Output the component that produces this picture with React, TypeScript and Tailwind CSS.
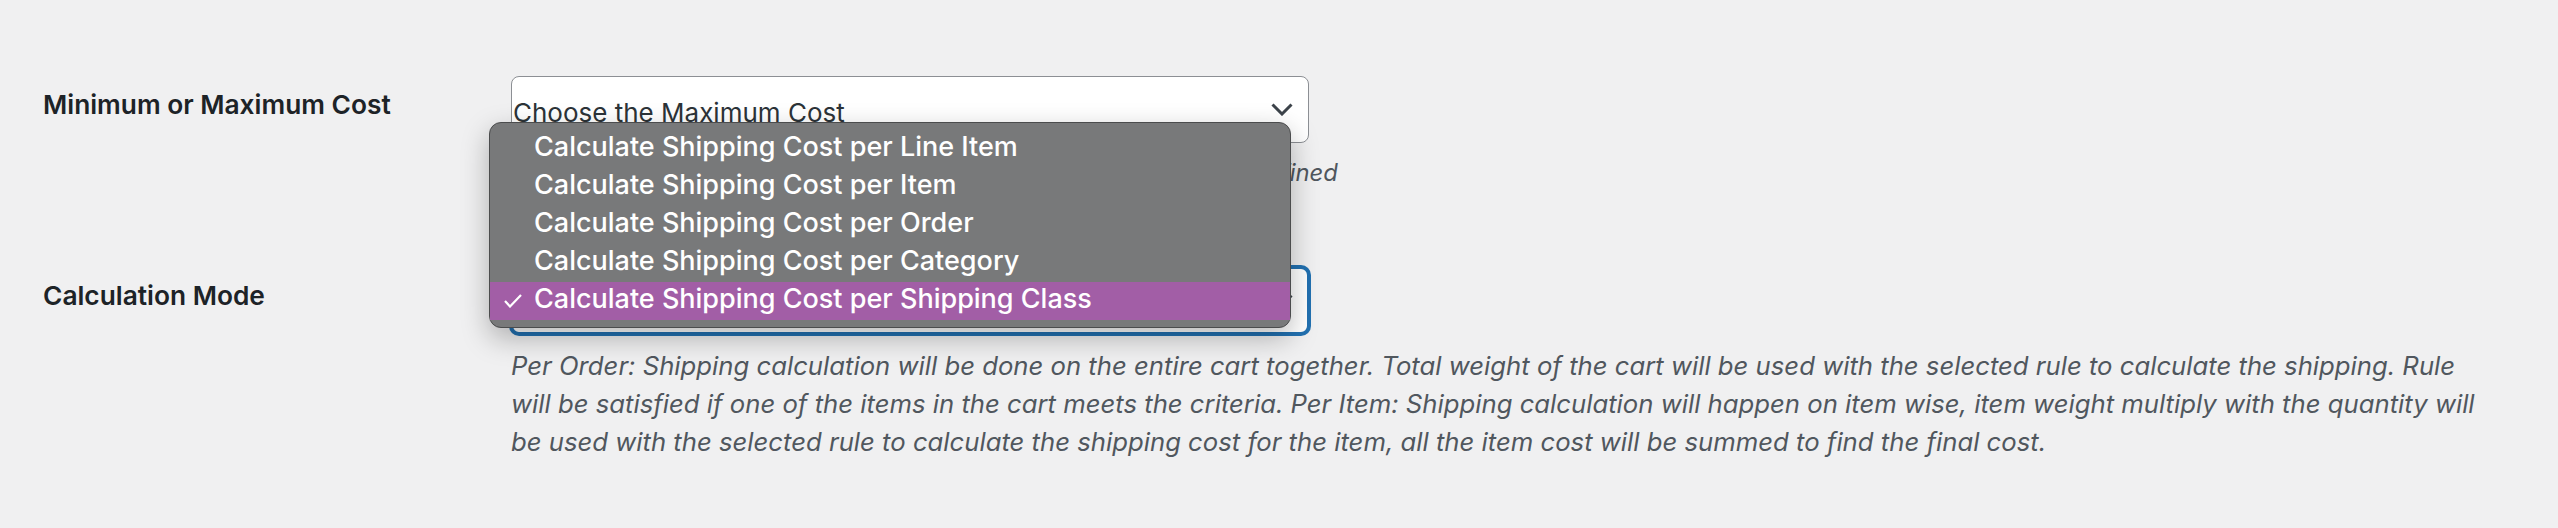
import React from "react";

const font = { fontFamily: "Inter, 'Noto Sans', sans-serif" };

const options = [
  "Calculate Shipping Cost per Line Item",
  "Calculate Shipping Cost per Item",
  "Calculate Shipping Cost per Order",
  "Calculate Shipping Cost per Category",
  "Calculate Shipping Cost per Shipping Class",
];

const modeHelp = [
  "Per Order: Shipping calculation will be done on the entire cart together. Total weight of the cart will be used with the selected rule to calculate the shipping. Rule",
  "will be satisfied if one of the items in the cart meets the criteria. Per Item: Shipping calculation will happen on item wise, item weight multiply with the quantity will",
  "be used with the selected rule to calculate the shipping cost for the item, all the item cost will be summed to find the final cost.",
];

function Chevron() {
  return (
    <svg width="22" height="13" viewBox="0 0 22 13" className="shrink-0">
      <path d="M1.5 1.5 L11 11 L20.5 1.5" fill="none" stroke="#3c434a" strokeWidth="3" />
    </svg>
  );
}

function Check() {
  return (
    <svg width="18" height="14" viewBox="0 0 18 14">
      <path d="M1 7 L6 12.5 L17 1" fill="none" stroke="white" strokeWidth="2.2" />
    </svg>
  );
}

const labelCls = "w-[468px] shrink-0 pt-[12px] text-[26.3px] leading-[34px] font-semibold text-[#1d2327]";
const descCls = "leading-[38px] italic text-[#50575e] whitespace-nowrap";

export default function App() {
  return (
    <div className="relative h-[528px] w-full bg-[#f0f0f1] pl-[43px] pt-[76px]" style={font}>
      <div className="flex">
        <div className={labelCls}>Minimum or Maximum Cost</div>
        <div>
          <div className="flex h-[67px] w-[798px] items-center justify-between rounded-[8px] border border-[#8c8f94] bg-white pl-[1px] pr-[15px]">
            <span className="mt-[6px] text-[26px] text-[#2c3338]">Choose the Maximum Cost</span>
            <Chevron />
          </div>
          <p className={`${descCls} mt-[11px] text-[23.8px]`}>
            Select the minimum or maximum cost when more than one rule is defined
          </p>
        </div>
      </div>

      <div className="mt-[75px] flex">
        <div className={labelCls}>Calculation Mode</div>
        <div>
          <div className="flex h-[67px] w-[798px] items-center justify-between rounded-[8px] border-2 border-[#2271b1] bg-white pl-[1px] pr-[14px] shadow-[0_0_0_2px_#2271b1]">
            <span className="text-[26px] text-[#2c3338]">Calculate Shipping Cost per Shipping Class</span>
            <Chevron />
          </div>
          <div className="mt-[13px]">
            {modeHelp.map((line) => (
              <p key={line} className={`${descCls} text-[25.7px]`}>
                {line}
              </p>
            ))}
          </div>
        </div>
      </div>

      <div className="absolute left-[489px] top-[122px] w-[802px] rounded-[12px] border border-[#4b4c4d] bg-[#78797a] py-[7px] shadow-[0_10px_28px_rgba(0,0,0,0.28)]">
        {options.map((o, i) => {
          const sel = i === options.length - 1;
          return (
            <div
              key={o}
              className={`flex h-[38px] items-center text-[27px] font-medium text-white ${sel ? "bg-[#a25ea6]" : ""}`}
            >
              <span className="flex w-[44px] justify-start pl-[14px]">{sel ? <Check /> : null}</span>
              <span className="-mt-[3px]">{o}</span>
            </div>
          );
        })}
      </div>
    </div>
  );
}
